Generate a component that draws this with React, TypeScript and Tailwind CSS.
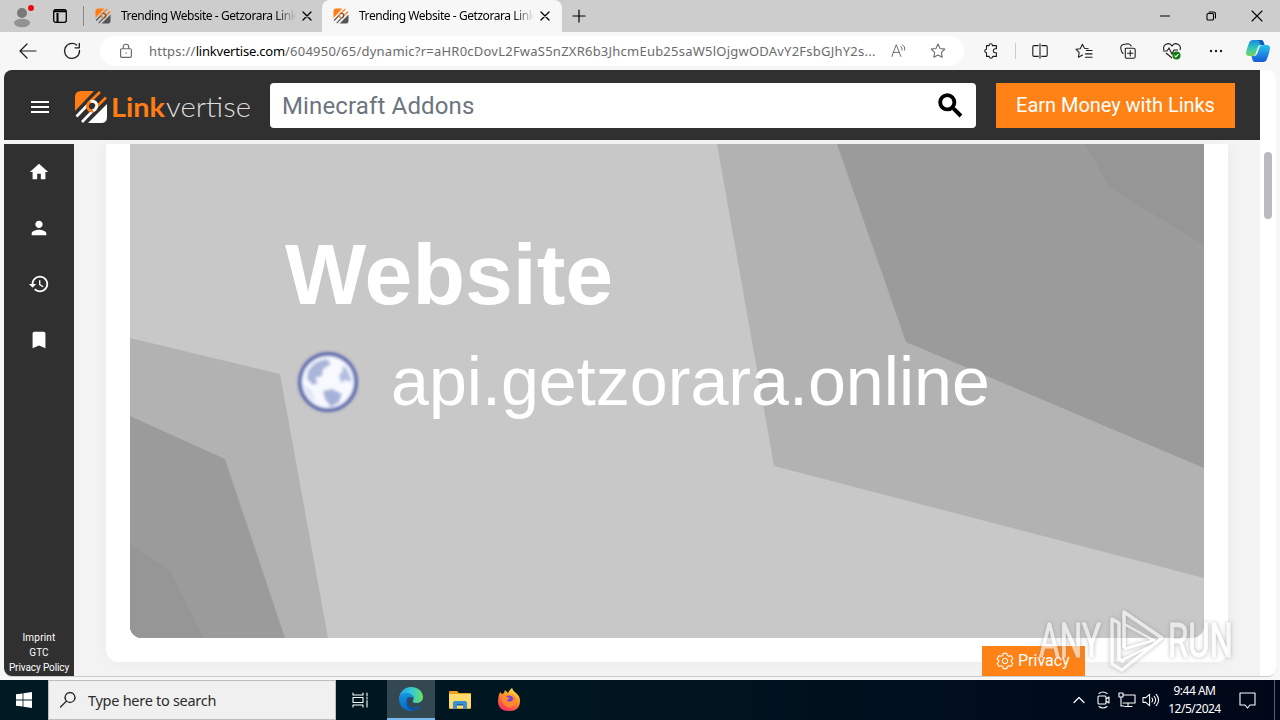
import React from 'react';

type IconProps = { className?: string };

const UI_FONT = "font-['Noto_Sans','Open_Sans',sans-serif]";
const WEB_FONT = 'font-[Roboto,sans-serif]';

const Line: React.FC<{ d: string; size?: number; box?: string; width?: number; className?: string }> = ({
  d,
  size = 20,
  box = '0 0 20 20',
  width = 1.1,
  className = '',
}) => (
  <svg width={size} height={size} viewBox={box} fill="none" stroke="currentColor" strokeWidth={width} strokeLinecap="round" strokeLinejoin="round" className={`shrink-0 ${className}`}>
    <path d={d} />
  </svg>
);

const Solid: React.FC<{ d: string; size?: number; className?: string }> = ({ d, size = 24, className = '' }) => (
  <svg width={size} height={size} viewBox="0 0 24 24" fill="currentColor" className={`shrink-0 ${className}`}>
    <path d={d} />
  </svg>
);

const STAR = 'M10 2.3l2.3 4.9 5.3.7-3.9 3.7 1 5.4-4.7-2.6L5.300 17l1-5.400L2.400 7.900l5.300-.7z';

/* Linkvertise mark */
const Mark: React.FC<IconProps & { light?: string }> = ({ className = '', light = '#fff' }) => (
  <svg viewBox="0 0 32 34" fill="none" className={`shrink-0 ${className}`}>
    <path d="M6 1h13L0 21V7q0-6 6-6z" fill="#ff7d14" />
    <path d="M32 14v13q0 6-6 6H13z" fill={light} />
    <path d="M25 2L13 13.500M31 7.500L20 18.500" stroke="#ff7d14" strokeWidth="2.600" />
    <path d="M12.500 15L1.500 26.500M19 19.500L7 32" stroke={light} strokeWidth="2.600" />
    <path d="M15.500 11.500q-4.500 3-2.500 7 2 3 5.500 2.500" stroke="#ff7d14" strokeWidth="2.800" />
    <path d="M15.500 11.500q4.500-1 6 2.500 1 4-3 7" stroke={light} strokeWidth="2.800" />
  </svg>
);

const Tab: React.FC<{ active?: boolean }> = ({ active }) => (
  <div className={`flex h-8 items-center pl-[11px] ${active ? 'w-[240px] rounded-t-lg bg-[#f7f7f7]' : 'w-[238px]'}`}>
    <Mark className="h-4 w-4" light="#555" />
    <div className="ml-[10px] w-[175px] overflow-hidden whitespace-nowrap text-[12px] leading-4 text-black [mask-image:linear-gradient(to_right,black_88%,transparent_100%)]">
      <span className="tracking-[-0.45px]">Trending Website - Getzorara Link</span>
    </div>
    <Line d="M1 1l8 8M9 1l-8 8" size={10} box="0 0 10 10" width={1.3} className="ml-[6px]" />
  </div>
);

const TitleBar = () => (
  <div className="flex h-8 items-center bg-[#cdcdcd] text-black">
    <svg width="26" height="26" viewBox="0 0 26 26" className="ml-[9px] shrink-0">
      <circle cx="13" cy="10" r="5" fill="#797979" />
      <ellipse cx="13" cy="20" rx="8" ry="4.200" fill="#929292" />
      <circle cx="22" cy="5" r="3" fill="#e30b16" />
    </svg>
    <svg width="14" height="14" viewBox="0 0 14 14" className="ml-[18px] shrink-0" fill="none" stroke="#000" strokeWidth="1.3">
      <rect x=".7" y=".7" width="12.600" height="12.600" rx="2" />
      <path d="M1 2.200h12M4.500 4v9" strokeWidth="2" />
    </svg>
    <div className="ml-4 h-5 w-px bg-[#888]" />
    <Tab />
    <Tab active />
    <Line d="M7 1v12M1 7h12" size={14} box="0 0 14 14" width={1.200} className="ml-[10px]" />
    <Line d="M0 5h10" size={10} box="0 0 10 10" className="ml-auto mr-[36px]" />
    <Line d="M1 3.500q0-1 1-1h4.500q1 0 1 1V8q0 1-1 1H2q-1 0-1-1zM3 1h4.500Q9.500 1 9.500 3v4" size={11} box="0 0 11 11" className="mr-[34px]" />
    <Line d="M1 1l10 10M11 1L1 11" size={12} box="0 0 12 12" className="mr-[17px]" />
  </div>
);

const Toolbar = () => (
  <div className="flex h-[38px] items-center bg-[#f7f7f7] text-[#1c1c1c]">
    <Line d="M9 3L2 10l7 7M2 10h16" className="ml-[18px]" width={1.200} />
    <Line d="M17.500 9.500A7.500 7.500 0 1 1 14.600 4M17.300 2.500v4.300h-4.300" className="ml-6" width={1.300} />
    <div className="ml-[18px] flex h-[30px] w-[864px] items-center rounded-full bg-white text-[#6b6b6b]">
      <Line d="M5.500 7.500h9q1.500 0 1.500 1.500v6.500q0 1.500-1.500 1.500h-9Q4 17 4 15.500V9q0-1.500 1.500-1.500zM7 7V5.500Q7 2.500 10 2.500t3 3V7M10 12v.4" size={18} className="ml-[17px]" width={1.300} />
      <div className="ml-[14px] w-[735px] whitespace-nowrap text-[13px] leading-5 tracking-[0.23px]">
        https://<span className="tracking-[-0.2px] text-black">linkvertise.com</span>/604950/65/dynamic?r=aHR0cDovL2FwaS5nZXR6b3JhcmEub25saW5lOjgwODAvY2FsbGJhY2s...
      </div>
      <Line d="M2 16L7 3l5 13M3.600 11.500h6.800M12 5q2 1.500 1.500 4M14 3q3 2 2.500 6" size={18} className="ml-[6px]" />
      <Line d={STAR} size={18} className="ml-[21px]" width={1.200} />
    </div>
    <Line d="M5 4h3q-.3-2 1.700-2t1.800 2H16v3.500h-1.500q-2 .2-2 2.200t2 2.300H16V16h-4q-.4 2-2 2t-2-2H5v-4q-2-.3-2-2t2-2z" size={18} className="ml-[18px]" width={1.200} />
    <div className="ml-[15px] h-4 w-px bg-[#ccc]" />
    <Line d="M8 4H3.500Q2 4 2 5.500v9Q2 16 3.500 16H8M12 4h4.500Q18 4 18 5.500v9q0 1.500-1.500 1.500H12M10 2v16" size={18} className="ml-[15px]" width={1.200} />
    <Line d="M14 7l-4-.4-2.200-4.300L5.500 7 1 7.600l3.400 3.500-.8 4.900L8 13.700M12 9h6M11 12.500h7M11 16h7" size={19} className="ml-[26px]" />
    <Line d="M8 7h8q2 0 2 2v7q0 2-2 2H9q-2 0-2-2V7M12.500 9.500v6M9.500 12.500h6M4.500 13Q2.500 11 2 7.500 1.500 3.500 5 2.700l5-.7q2.500 0 3.500 2.500" size={18} className="ml-[25px]" width={1.200} />
    <svg width="20" height="20" viewBox="0 0 20 20" fill="none" stroke="currentColor" strokeWidth="1.100" className="ml-[25px] shrink-0">
      <path d="M2 9Q.5 5 4 3.200 8 1.500 10 5q2-3.500 6-1.800 3.500 1.800 2 5.800M1 10h4l2-3 3 6 2-4h4M4 12l6 5" />
      <circle cx="14.500" cy="14.500" r="4" fill="#107c10" stroke="none" />
      <path d="M12.500 14.500l1.300 1.400 2.700-2.800" stroke="#fff" />
    </svg>
    <svg width="14" height="4" className="ml-[27px] shrink-0" fill="currentColor">
      <circle cx="2" cy="2" r="1.200" />
      <circle cx="7" cy="2" r="1.200" />
      <circle cx="12" cy="2" r="1.200" />
    </svg>
    <svg width="24" height="24" viewBox="0 0 24 24" className="ml-[23px] shrink-0">
      <defs>
        <linearGradient id="cpA" x2="0" y2="1">
          <stop stopColor="#1689e4" />
          <stop offset=".5" stopColor="#30c7b8" />
          <stop offset="1" stopColor="#77d45a" />
        </linearGradient>
        <linearGradient id="cpB" x2="0" y2="1">
          <stop stopColor="#28c3ef" />
          <stop offset="1" stopColor="#1459d9" />
        </linearGradient>
      </defs>
      <path d="M7 1h8q2 0 2.500 2l1 3h-4q-2 0-3 3l-2 6q-.5 2-3 2H3q-3 0-3-3 1-5 3-10 1-3 4-3z" fill="url(#cpA)" />
      <path d="M17 6h4q3 0 3 3-.5 5-3 11-1 3-4 3H9q-2 0-2.500-2l-1-4h3q2 0 3-3l2-6q.8-2 3.500-2z" fill="url(#cpB)" />
      <path d="M7 1h8q2 0 2.500 2l1 3h-4l-1-3Q13 1 11 1z" fill="#1459b5" />
    </svg>
  </div>
);

const SiteHeader = () => (
  <header className={`flex h-[70px] w-[1256px] items-center rounded-tl-lg bg-[#303030] ${WEB_FONT}`}>
    <div className="ml-[27px] mt-1 flex w-[18px] flex-col gap-[3px]">
      <div className="h-[2px] bg-white" />
      <div className="h-[2px] bg-white" />
      <div className="h-[2px] bg-white" />
    </div>
    <Mark className="ml-[26px] mt-1 h-[34px] w-8" />
    <svg width="142" height="34" viewBox="0 0 142 34" className="ml-[4px] mt-1 shrink-0" fontFamily="Lato, sans-serif" fontSize="27">
      <text x="0" y="27" textLength="54" lengthAdjust="spacingAndGlyphs" fontWeight="700" fill="#ff7d14">Link</text>
      <text x="55" y="27" textLength="85" lengthAdjust="spacingAndGlyphs" fontWeight="300" fill="#ddd">vertise</text>
    </svg>
    <div className="ml-[17px] flex h-[45px] w-[706px] items-center justify-between rounded-[4px] bg-white pl-3 pr-[10px]">
      <span className="pt-[2px] text-[24px] leading-none tracking-[0.14px] text-[#6c757d]">Minecraft Addons</span>
      <Solid
        size={31}
        className="text-black [stroke:currentColor]"
        d="M15.500 14h-.79l-.28-.27A6.471 6.471 0 0 0 16 9.500 6.500 6.500 0 1 0 9.500 16c1.610 0 3.090-.59 4.230-1.570l.27.28v.79l5 4.990L20.490 19zm-6 0C7.010 14 5 11.990 5 9.500S7.010 5 9.500 5 14 7.010 14 9.500 11.990 14 9.500 14"
      />
    </div>
    <button className="ml-5 h-[45px] w-[239px] bg-[#ff8217] text-[20px] leading-none tracking-[-0.03px] text-white">Earn Money with Links</button>
  </header>
);

const navIcons = [
  'M10 20v-6h4v6h5v-8h3L12 3 2 12h3v8z',
  'M12 12c2.210 0 4-1.790 4-4s-1.790-4-4-4-4 1.790-4 4 1.790 4 4 4m0 2c-2.670 0-8 1.340-8 4v2h16v-2c0-2.660-5.330-4-8-4',
  'M13 3c-4.970 0-9 4.030-9 9H1l3.890 3.890.07.14L9 12H6c0-3.870 3.130-7 7-7s7 3.130 7 7-3.130 7-7 7c-1.930 0-3.680-.79-4.940-2.060l-1.420 1.420C8.270 19.990 10.510 21 13 21c4.970 0 9-4.030 9-9s-4.030-9-9-9m-1 5v5l4.280 2.540.72-1.210-3.500-2.080V8z',
  'M17 3H7c-1.100 0-2 .9-2 2v16l7-3 7 3V5c0-1.100-.9-2-2-2',
];

const Sidebar = () => (
  <aside className={`flex w-[70px] flex-col items-center rounded-bl-lg bg-[#303030] pt-[17px] text-white ${WEB_FONT}`}>
    <nav className="flex flex-col gap-[34px]">
      {navIcons.map((d) => (
        <Solid key={d} d={d} size={22} />
      ))}
    </nav>
    <div className="mt-auto pb-px text-center text-[10px] leading-[15px]">
      <p className="tracking-[0.2px]">Imprint</p>
      <p className="tracking-[0.1px]">GTC</p>
      <p className="whitespace-nowrap tracking-[-0.1px]">Privacy Policy</p>
    </div>
  </aside>
);

const Globe = () => (
  <svg width="66" height="66" viewBox="0 0 66 66" className="shrink-0">
    <defs>
      <filter id="soft" x="-10%" y="-10%" width="120%" height="120%">
        <feGaussianBlur stdDeviation="1.800" />
      </filter>
    </defs>
    <g filter="url(#soft)">
      <circle cx="33" cy="33" r="28" fill="#f7f9ff" stroke="#5a67ad" strokeWidth="4" />
      <path d="M13 22q7-11 19-12l4 5-8 5-1 7-7 2 3 5-5 2-6-6z" fill="#a9b5d9" />
      <path d="M48 16q8 8 8 17l-6-2-4 3-2-8 3-3z" fill="#b3bee0" />
      <path d="M28 42l9-2 10 5-3 8-8 5-6-8z" fill="#a5b1d8" />
      <path d="M8 36l8 5 5 12q-9-6-13-17z" fill="#dbe2f6" />
    </g>
  </svg>
);

const Hero = () => (
  <div className="relative h-[494px] w-[1074px] overflow-hidden rounded-b-xl bg-[#c8c8c8]">
    <svg width="1074" height="494" className="absolute inset-0">
      <path d="M587 0l57 322 430 112V0z" fill="#b2b2b2" />
      <path d="M707 0l69 198 298 126V0z" fill="#9b9b9b" />
      <path d="M955 0l25 44 94 57V0z" fill="#969696" />
      <path d="M0 194l150 36 48 264H0z" fill="#b2b2b2" />
      <path d="M0 272l95 43 60 179H0z" fill="#9b9b9b" />
      <path d="M0 401l40 25 34 68H0z" fill="#969696" />
    </svg>
    <div className="relative pl-[155px] pt-[87px] font-['Liberation_Sans',Arial,sans-serif] text-white">
      <h1 className="text-[86px] font-bold leading-[86px]">Website</h1>
      <div className="mt-[31px] flex items-center pl-[10px]">
        <Globe />
        <span className="relative -top-px ml-[30px] text-[68.200px] leading-[68px]">api.getzorara.online</span>
      </div>
    </div>
  </div>
);

const Watermark = () => (
  <svg width="204" height="74" viewBox="0 0 204 74" className="pointer-events-none absolute left-[1036px] top-[604px] opacity-60 drop-shadow-[0_0_2px_#888]" fill="#fff" stroke="#fff" strokeWidth="1">
    <g fontFamily="Roboto, sans-serif" fontSize="49">
      <text x="3" y="53" textLength="62" lengthAdjust="spacingAndGlyphs">ANY</text>
      <text x="132" y="53" textLength="65" lengthAdjust="spacingAndGlyphs">RUN</text>
    </g>
    <path d="M88 44V8l38 26-40 32-10-6V15l7 4v36l5 3" fill="none" strokeWidth="3.500" strokeLinejoin="round" />
    <path d="M88 20l31 17M88 45l31-9M84 57l37-18" fill="none" strokeWidth="2.500" />
  </svg>
);

const Taskbar = () => (
  <footer className="flex h-10 items-center bg-linear-to-r from-[#001a23] via-[#001520] via-50% to-[#000719] text-white">
    <div className="flex w-12 justify-center">
      <svg width="16" height="16" viewBox="0 0 16 16" fill="#fff">
        <path d="M0 2.300L6.600 1.400v6.200H0zM7.400 1.300L16 0v7.600H7.400zM0 8.400h6.600v6.200L0 13.700zM7.400 8.400H16V16l-8.600-1.300z" />
      </svg>
    </div>
    <div className="flex h-10 w-[288px] items-center border border-[#bdbdbd] bg-[#f0f0f0] text-[#2c2c2c]">
      <Line d="M11 1.500a5 5 0 1 0 .01 0zM7.300 10.200L1.500 16" size={18} box="0 0 18 18" width={1.300} className="ml-[10px]" />
      <span className="ml-[11px] text-[14.500px] leading-5 tracking-[-0.28px]">Type here to search</span>
    </div>
    <Line d="M1 1v2h10V1M1 15v-2h10v2M1 5.500h10v5H1zM15 1v3M15 8.500V15M15 5.500v1.500" size={16} box="0 0 16 16" className="ml-4" />
    <div className="ml-[19px] flex h-10 w-12 items-center justify-center border-b-2 border-[#76b9ed] bg-[#334850]">
      <svg width="24" height="24" viewBox="0 0 24 24">
        <defs>
          <linearGradient id="edgeTop" x2="1">
            <stop stopColor="#239ce5" />
            <stop offset=".5" stopColor="#31c6dc" />
            <stop offset="1" stopColor="#6be35e" />
          </linearGradient>
          <linearGradient id="edgeLow" x2="0" y2="1">
            <stop stopColor="#1595df" />
            <stop offset="1" stopColor="#0868c5" />
          </linearGradient>
        </defs>
        <path d="M0 12C.5 5 5 0 12 0c7 0 12 4.600 12 10 0 4-3 6-7 6-3 0-4-1-3-2.500 2-3.500-1-6.500-5-6.500-4 0-8 2-9 5z" fill="url(#edgeTop)" />
        <path d="M0 12c0-4 4-6 8-6 3 0 6 1.500 6.500 5-3-2-6 0-6 4 0 5 6 7 13.500 4-2 3-5.500 5-10 5C5 24 0 19 0 12z" fill="url(#edgeLow)" />
        <path d="M9 10c-4 5-1 12 5 13.800C20 23 22 19.500 22 19c-7 3-13.500 1-13.500-4 0-2.500 1.500-4 3-4.500z" fill="#125098" />
      </svg>
    </div>
    <svg width="22" height="18" viewBox="0 0 22 18" className="ml-[14px]">
      <path d="M0 1q0-1 1-1h7l2 2h11q1 0 1 1v14q0 1-1 1H1q-1 0-1-1z" fill="#e9a21c" />
      <path d="M0 3h22v14H0z" fill="#ffdb6e" />
      <path d="M4 18v-6q0-2 2-2h10q2 0 2 2v6h-4v-4H8v4z" fill="#3990d4" />
      <path d="M8 13h6v1.500H8z" fill="#1f5f96" />
    </svg>
    <svg width="24" height="24" viewBox="0 0 24 24" className="ml-[26px]">
      <defs>
        <linearGradient id="fox" x1=".8" y1="0" x2=".3" y2="1">
          <stop stopColor="#fff04a" />
          <stop offset=".4" stopColor="#ff9a24" />
          <stop offset="1" stopColor="#fb2b63" />
        </linearGradient>
      </defs>
      <path d="M3 4l2 2 2-1 1-3 3 3q2-4 4-5 1 3 4 5 4 3 4 8 0 10-11 10Q1 23 1 13q0-5 2-9z" fill="url(#fox)" />
      <circle cx="12" cy="12.500" r="5" fill="#7942d8" />
      <path d="M5 9q3-2 5 0l3 1-3 2q1 3 5 1 3-3-1-7 6 2 5 8-2 6-8 5-6-1-6-10z" fill="#ff8a2b" />
    </svg>
    <Line d="M2 7.500l5-5 5 5" size={14} box="0 0 14 10" width={1.200} className="ml-auto" />
    <Line d="M4 5h6q1 0 1 1v6q0 1-1 1H4q-1 0-1-1V6q0-1 1-1zM11 8l3-2v6l-3-2M4 2.500q4-3 8 0M4 15.500q4 3 8 0" size={18} box="0 0 18 18" className="ml-[9px]" />
    <Line d="M5 4h12v8H5M10 12v3M7 15.500h7M1 2h4v4H1zM3 6v9h3" size={18} box="0 0 18 18" className="ml-[5px]" />
    <Line d="M1 6.500h3l4-3.500v12l-4-3.500H1zM10.500 7q1.500 2 0 4M12.800 5q3.200 4 0 8M15 3q5 6 0 12" size={18} box="0 0 19 18" className="ml-[6px]" />
    <div className="ml-[7px] w-[55px] whitespace-nowrap text-center text-[12px] leading-[18px] tracking-[-0.5px]">
      <p>9:44 AM</p>
      <p>12/5/2024</p>
    </div>
    <Line d="M1 1h15v12h-5l-2.500 3L6 13H1z" size={17} box="0 0 17 17" className="ml-[17px] mr-[18px]" />
    <div className="mr-[5px] h-10 w-px bg-[#596070]" />
  </footer>
);

export default function App() {
  return (
    <div className={`relative flex h-[720px] w-[1280px] flex-col overflow-hidden bg-[#f7f7f7] ${UI_FONT}`}>
      <TitleBar />
      <Toolbar />
      <div className="mx-1 flex h-[607px] flex-col rounded-lg border-b border-[#ccc] bg-white">
        <SiteHeader />
        <div className="h-1 w-[1256px] bg-[#f5f5f5]" />
        <div className="flex h-[532px]">
          <Sidebar />
          <main className="w-[1186px] bg-[#f3f3f3] px-8">
            <div className="h-[518px] w-[1122px] rounded-b-xl bg-white px-6 shadow-[0_0_16px_rgba(0,0,0,0.04)]">
              <Hero />
            </div>
          </main>
          <div className="ml-1 mt-2 h-[67px] w-2 rounded-full bg-[#b9b9bf]" />
        </div>
      </div>
      <div className="h-[3px]" />
      <Taskbar />

      {/* floating privacy button */}
      <button className={`absolute left-[982px] top-[646px] flex h-[30px] w-[103px] items-center bg-[#ff8217] pl-[14px] text-[16px] leading-none text-white ${WEB_FONT}`}>
        <Line d="M8 1.500h4l.7 2.500 1.500.8 2.500-.7 2 3.400-1.800 1.800v1.500l1.800 1.800-2 3.400-2.500-.7-1.500.8L12 18.500H8l-.7-2.400-1.500-.8-2.500.7-2-3.400 1.800-1.800V9.300L1.300 7.500l2-3.400 2.500.7L7.300 4zM10 7a3 3 0 1 0 .01 0z" size={18} width={1.200} />
        <span className="ml-1">Privacy</span>
      </button>
      <Watermark />
    </div>
  );
}
